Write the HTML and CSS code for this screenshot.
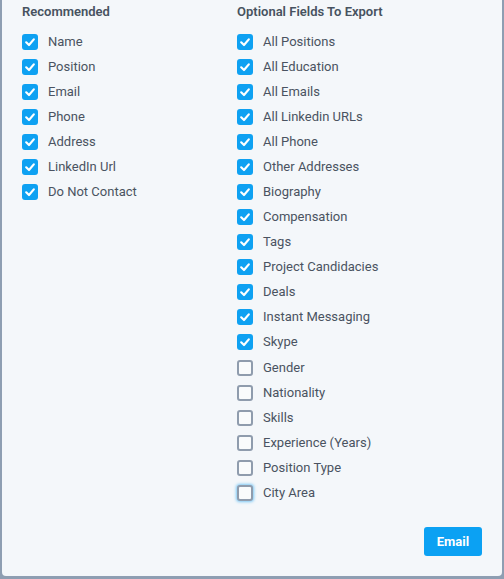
FILE: index.html
```html
<!DOCTYPE html>
<html>
<head>
<meta charset="utf-8">
<link rel="stylesheet" href="styles.css">
</head>
<body>
<div class="panel">
  <div class="columns">
    <div class="col col-left">
      <div class="heading">Recommended</div>
      <ul class="list">
        <li class="item"><span class="box checked"><svg viewBox="0 0 16 16"><path d="M4.2 8.3 L7 11 L11.8 5.4"/></svg></span><span class="label">Name</span></li>
        <li class="item"><span class="box checked"><svg viewBox="0 0 16 16"><path d="M4.2 8.3 L7 11 L11.8 5.4"/></svg></span><span class="label">Position</span></li>
        <li class="item"><span class="box checked"><svg viewBox="0 0 16 16"><path d="M4.2 8.3 L7 11 L11.8 5.4"/></svg></span><span class="label">Email</span></li>
        <li class="item"><span class="box checked"><svg viewBox="0 0 16 16"><path d="M4.2 8.3 L7 11 L11.8 5.4"/></svg></span><span class="label">Phone</span></li>
        <li class="item"><span class="box checked"><svg viewBox="0 0 16 16"><path d="M4.2 8.3 L7 11 L11.8 5.4"/></svg></span><span class="label">Address</span></li>
        <li class="item"><span class="box checked"><svg viewBox="0 0 16 16"><path d="M4.2 8.3 L7 11 L11.8 5.4"/></svg></span><span class="label">LinkedIn Url</span></li>
        <li class="item"><span class="box checked"><svg viewBox="0 0 16 16"><path d="M4.2 8.3 L7 11 L11.8 5.4"/></svg></span><span class="label">Do Not Contact</span></li>
      </ul>
    </div>
    <div class="col col-right">
      <div class="heading">Optional Fields To Export</div>
      <ul class="list">
        <li class="item"><span class="box checked"><svg viewBox="0 0 16 16"><path d="M4.2 8.3 L7 11 L11.8 5.4"/></svg></span><span class="label">All Positions</span></li>
        <li class="item"><span class="box checked"><svg viewBox="0 0 16 16"><path d="M4.2 8.3 L7 11 L11.8 5.4"/></svg></span><span class="label">All Education</span></li>
        <li class="item"><span class="box checked"><svg viewBox="0 0 16 16"><path d="M4.2 8.3 L7 11 L11.8 5.4"/></svg></span><span class="label">All Emails</span></li>
        <li class="item"><span class="box checked"><svg viewBox="0 0 16 16"><path d="M4.2 8.3 L7 11 L11.8 5.4"/></svg></span><span class="label">All Linkedin URLs</span></li>
        <li class="item"><span class="box checked"><svg viewBox="0 0 16 16"><path d="M4.2 8.3 L7 11 L11.8 5.4"/></svg></span><span class="label">All Phone</span></li>
        <li class="item"><span class="box checked"><svg viewBox="0 0 16 16"><path d="M4.2 8.3 L7 11 L11.8 5.4"/></svg></span><span class="label">Other Addresses</span></li>
        <li class="item"><span class="box checked"><svg viewBox="0 0 16 16"><path d="M4.2 8.3 L7 11 L11.8 5.4"/></svg></span><span class="label">Biography</span></li>
        <li class="item"><span class="box checked"><svg viewBox="0 0 16 16"><path d="M4.2 8.3 L7 11 L11.8 5.4"/></svg></span><span class="label">Compensation</span></li>
        <li class="item"><span class="box checked"><svg viewBox="0 0 16 16"><path d="M4.2 8.3 L7 11 L11.8 5.4"/></svg></span><span class="label">Tags</span></li>
        <li class="item"><span class="box checked"><svg viewBox="0 0 16 16"><path d="M4.2 8.3 L7 11 L11.8 5.4"/></svg></span><span class="label">Project Candidacies</span></li>
        <li class="item"><span class="box checked"><svg viewBox="0 0 16 16"><path d="M4.2 8.3 L7 11 L11.8 5.4"/></svg></span><span class="label">Deals</span></li>
        <li class="item"><span class="box checked"><svg viewBox="0 0 16 16"><path d="M4.2 8.3 L7 11 L11.8 5.4"/></svg></span><span class="label">Instant Messaging</span></li>
        <li class="item"><span class="box checked"><svg viewBox="0 0 16 16"><path d="M4.2 8.3 L7 11 L11.8 5.4"/></svg></span><span class="label">Skype</span></li>
        <li class="item"><span class="box"></span><span class="label">Gender</span></li>
        <li class="item"><span class="box"></span><span class="label">Nationality</span></li>
        <li class="item"><span class="box"></span><span class="label">Skills</span></li>
        <li class="item"><span class="box"></span><span class="label">Experience (Years)</span></li>
        <li class="item"><span class="box"></span><span class="label">Position Type</span></li>
        <li class="item"><span class="box focused"></span><span class="label">City Area</span></li>
      </ul>
    </div>
  </div>
  <div class="actions">
    <button class="btn-email">Email</button>
  </div>
</div>
</body>
</html>
```
FILE: styles.css
```css
html, body {
  margin: 0;
  padding: 0;
  background: #8e9eb2;
  font-family: Roboto, "Liberation Sans", Arial, sans-serif;
}
.panel {
  margin-left: 2px;
  width: 500px;
  height: 576px;
  box-sizing: border-box;
  background: #f4f7fa;
  border-radius: 0 0 4px 4px;
  padding: 4px 20px 0 20px;
  display: flex;
  flex-direction: column;
}
.columns {
  display: flex;
}
.col-left {
  width: 215px;
}
.col-right {
  flex: 1;
}
.heading {
  font-size: 13px;
  line-height: 16px;
  font-weight: 600;
  color: #475260;
}
.list {
  list-style: none;
  margin: 9.4px 0 0 0;
  padding: 0;
}
.item {
  height: 25.06px;
  display: flex;
  align-items: center;
}
.box {
  width: 16px;
  height: 16px;
  box-sizing: border-box;
  border-radius: 3px;
  border: 2px solid #8f9cad;
  background: #f9fbfc;
  flex: none;
  display: flex;
  align-items: center;
  justify-content: center;
}
.box.checked {
  border: none;
  background: #0ea1f2;
}
.box.focused {
  box-shadow: 0 0 3px 1px #7cc8f5;
}
.box svg {
  width: 16px;
  height: 16px;
  display: block;
}
.box svg path {
  fill: none;
  stroke: #ffffff;
  stroke-width: 2.2;
  stroke-linecap: round;
  stroke-linejoin: round;
}
.label {
  margin-left: 10px;
  font-size: 13px;
  color: #4a5361;
  line-height: 16px;
}
.actions {
  display: flex;
  justify-content: flex-end;
  margin-top: 21.6px;
}
.btn-email {
  width: 58px;
  height: 29px;
  border: none;
  border-radius: 3px;
  background: #0ba1f3;
  color: #ffffff;
  font-family: Roboto, "Liberation Sans", Arial, sans-serif;
  font-size: 13px;
  font-weight: 700;
  padding: 0;
  cursor: pointer;
}
```
